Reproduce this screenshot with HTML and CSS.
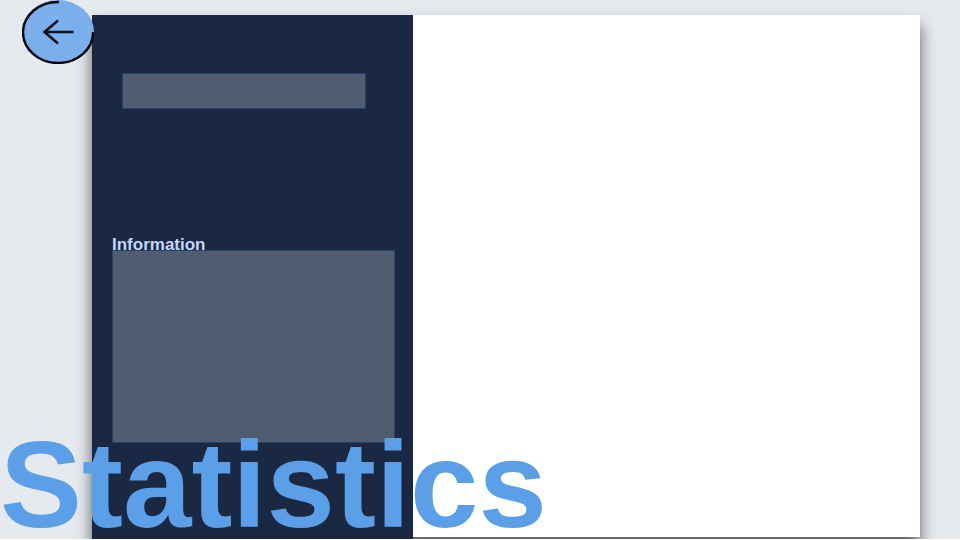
FILE: index.html
```html
<!DOCTYPE html>
<html lang="en">
<head>
<meta charset="utf-8">
<title>Statistics</title>
<link rel="stylesheet" href="styles.css">
</head>
<body>
<div class="page">
  <button class="back" type="button" aria-label="Back">
    <svg class="back-icon" viewBox="0 0 72 64" aria-hidden="true">
      <ellipse cx="36" cy="32" rx="36" ry="32" fill="#7aafeb"/>
      <path d="M37 2A35 30.500 0 1 0 71 32" fill="none" stroke="#05080e" stroke-width="2.400"/>
      <path d="M51.500 32H23M36 20.500L22.500 32L36 43.500" fill="none" stroke="#0b1320" stroke-width="2.600"/>
    </svg>
  </button>
  <main class="card">
    <section class="sidebar">
      <input class="search" type="text" aria-label="Search">
      <label class="label" for="info">Information</label>
      <textarea class="info" id="info"></textarea>
    </section>
    <section class="content"></section>
  </main>
  <h1 class="title">Statistics</h1>
</div>
</body>
</html>
```
FILE: styles.css
```css
* {
  box-sizing: border-box;
}

body {
  margin: 0;
  background: #fff;
  font-family: "Liberation Sans", Arial, sans-serif;
}

.page {
  position: relative;
  display: flex;
  height: calc(100vh - 1px);
  padding: 15px 40px 0 92px;
  background: #e6eaef;
}

.back {
  position: absolute;
  top: 0;
  left: 22px;
  z-index: 1;
  width: 72px;
  height: 64px;
  padding: 0;
  border: 0;
  border-radius: 50%;
  background: transparent;
}

.back-icon {
  display: block;
  width: 100%;
  height: 100%;
}

.card {
  display: flex;
  flex: 1;
  margin-bottom: 2px;
  background: #fff;
  box-shadow: 0 11px 15px rgba(0, 0, 0, 0.6);
}

.sidebar {
  display: flex;
  flex-direction: column;
  width: 321px;
  margin-bottom: -2px;
  padding: 58px 18px 0 20px;
  background: #1b2842;
}

.content {
  flex: 1;
}

.search,
.info {
  margin: 0;
  border: 1px solid #27436c;
  border-radius: 0;
  background: #525c70;
  color: #fff;
  outline: 0;
}

.search {
  width: 244px;
  height: 36px;
  margin-left: 10px;
}

.label {
  margin-top: 126px;
  height: 15px;
  color: #c6d5fc;
  font-size: 17px;
  font-weight: 700;
  line-height: 20px;
}

.info {
  height: 193px;
  resize: none;
}

.title {
  position: absolute;
  bottom: 0;
  left: 0;
  margin: 0;
  color: #5c9fe9;
  font-size: 123px;
  font-weight: 700;
  line-height: 108px;
}
```
